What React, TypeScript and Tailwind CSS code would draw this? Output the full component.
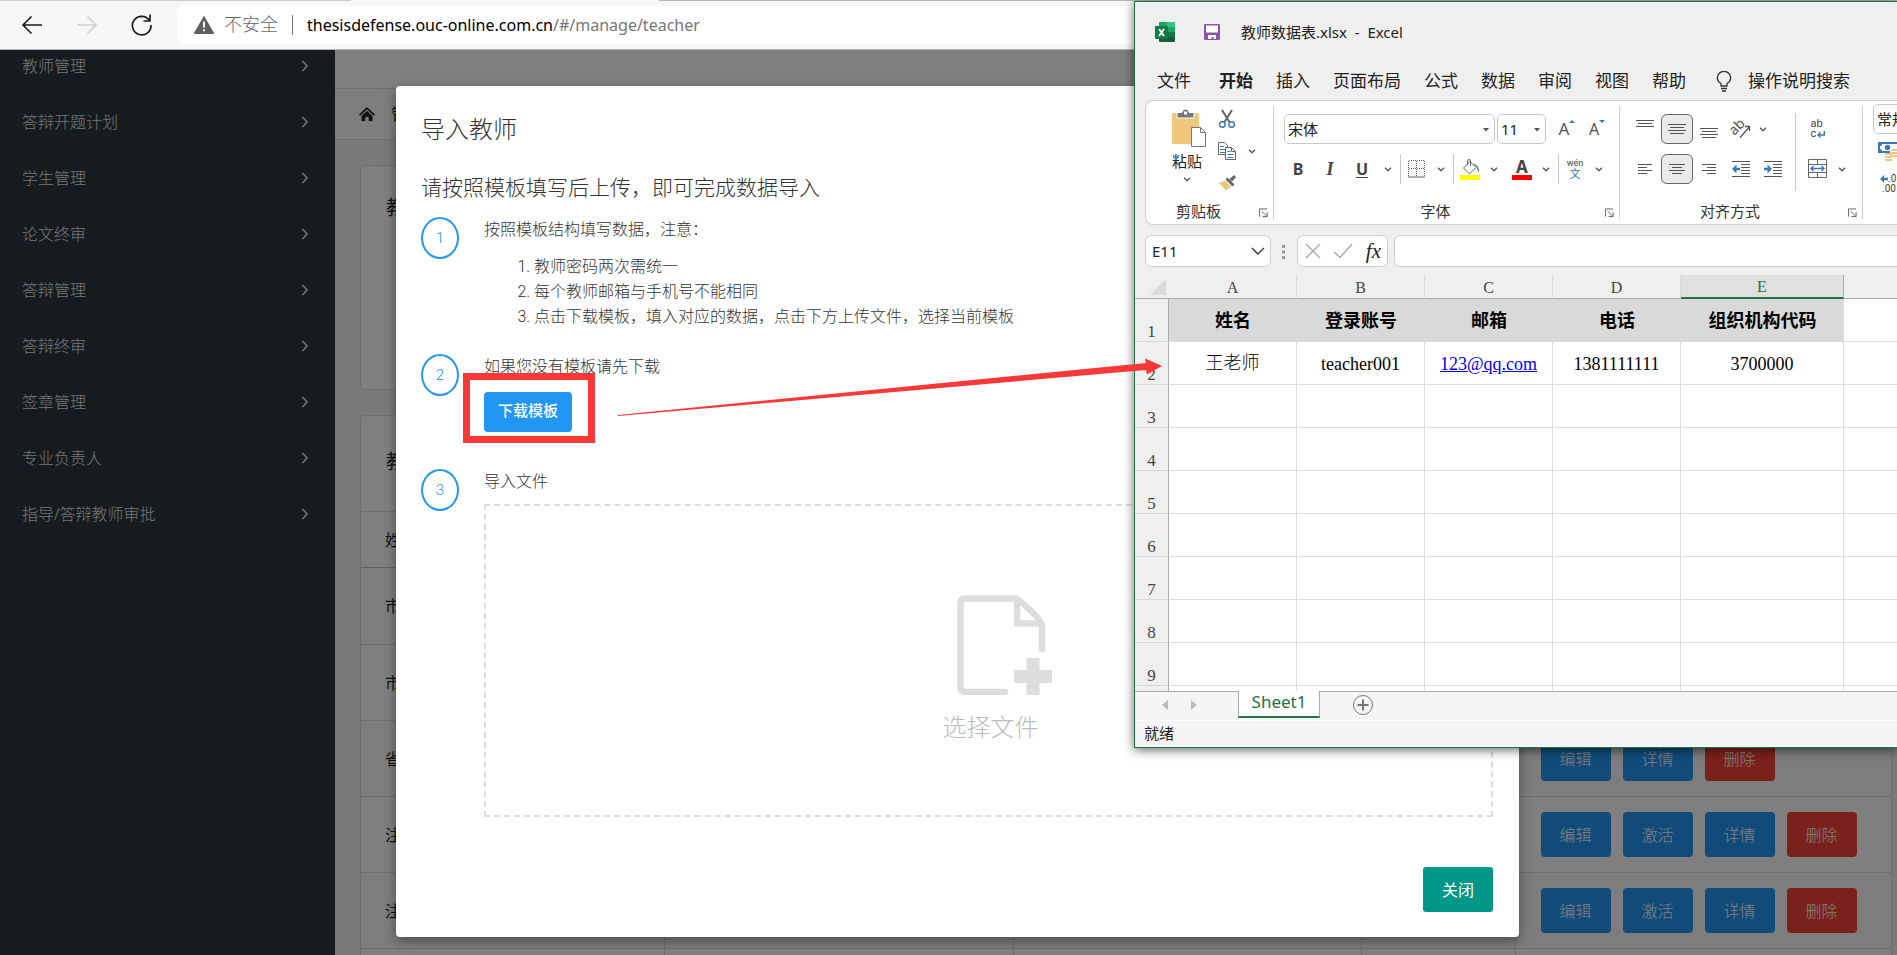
import type { ReactNode } from "react";

interface TeacherRow {
  name: string;
  actions: string[];
}

const menuItems = [
  "教师管理",
  "答辩开题计划",
  "学生管理",
  "论文终审",
  "答辩管理",
  "答辩终审",
  "签章管理",
  "专业负责人",
  "指导/答辩教师审批",
];

const teacherRows: TeacherRow[] = [
  { name: "市", actions: [] },
  { name: "市", actions: [] },
  { name: "省", actions: ["编辑", "详情", "删除"] },
  { name: "注", actions: ["编辑", "激活", "详情", "删除"] },
  { name: "注", actions: ["编辑", "激活", "详情", "删除"] },
  { name: "", actions: [] },
];

const ribbonTabs = ["开始", "插入", "页面布局", "公式", "数据", "审阅", "视图", "帮助"];
const sheetHeader = ["姓名", "登录账号", "邮箱", "电话", "组织机构代码"];
const sheetRows = ["3", "4", "5", "6", "7", "8", "9", ""];

const BrowserBar = () => (
  <header className="relative flex h-[50px] items-center border-b border-[#b5b5b5] bg-[#f7f7f7] pl-5">
    <div className="absolute left-0 top-0 h-px w-[351px] bg-[#cdcdcd]" />
    <div className="absolute left-[659px] right-0 top-0 h-px bg-[#b8b8b8]" />
    <button aria-label="back" className="h-6 w-6">
      <svg viewBox="0 0 24 24" className="h-6 w-6" fill="none" stroke="#1b1b1b" strokeWidth="1.6">
        <path d="M22 12H3M11.500 3.500L3 12l8.500 8.500" />
      </svg>
    </button>
    <button aria-label="forward" className="ml-[30px] h-6 w-6">
      <svg viewBox="0 0 24 24" className="h-6 w-6" fill="none" stroke="#cfcfcf" strokeWidth="1.600">
        <path d="M3 12h19M13.500 3.500L22 12l-8.500 8.500" />
      </svg>
    </button>
    <button aria-label="reload" className="ml-[31px] h-6 w-6">
      <svg viewBox="0 0 24 24" className="h-6 w-6" fill="none" stroke="#1b1b1b" strokeWidth="1.700">
        <path d="M20.500 7.500A9.300 9.300 0 1 0 22 12M21 1.500V8h-6.500" />
      </svg>
    </button>
    <div className="ml-6 flex h-[38px] flex-1 items-center rounded-md bg-white pl-[17px]">
      <svg viewBox="0 0 20 18" className="h-[18px] w-5">
        <path d="M10 0.500L19.800 17.500H0.200z" fill="#5f5f5f" stroke="#5f5f5f" strokeLinejoin="round" />
        <path d="M10 5.500v6M10 13.200v2" stroke="#fff" strokeWidth="1.800" />
      </svg>
      <span className="ml-[10px] text-[18px] font-light text-[#666]">不安全</span>
      <span className="mx-[14px] h-5 w-px bg-[#777]" />
      <span className="text-[16px] text-[#767676]">
        <span className="text-black">thesisdefense.ouc-online.com.cn</span>/#/manage/teacher
      </span>
    </div>
  </header>
);

const Sidebar = () => (
  <nav className="w-[335px] shrink-0 overflow-hidden bg-[#2a363c]">
    <ul className="-mt-3">
      {menuItems.map((item) => (
        <li key={item}>
          <a href="#menu" className="flex h-14 items-center justify-between pl-[22px] pr-[26px] text-[16px] font-light text-[#e8eaeb]">
            {item}
            <svg viewBox="0 0 8 12" className="h-3 w-2" fill="none" stroke="#e8eaeb" strokeWidth="1.600">
              <path d="M1.500 1l4.500 5-4.500 5" />
            </svg>
          </a>
        </li>
      ))}
    </ul>
  </nav>
);

const ManagePage = () => (
  <main className="min-w-0 flex-1 overflow-hidden bg-[#f5f5f5] text-[#222]">
    <div className="h-[39px] border-b border-[#ddd] bg-white" />
    <div className="flex h-[51px] items-center border-b border-[#ddd] bg-[#fdfdfd] pl-6">
      <svg viewBox="0 0 16 14" className="h-[14px] w-4" fill="#222">
        <path d="M8 0L16 7.500l-1.200 1.200L8 2.400 1.200 8.700 0 7.500z" />
        <path d="M8 4l5.500 5v5H9.700v-4H6.300v4H2.500V9z" />
      </svg>
      <span className="ml-4 text-[16px]">管</span>
    </div>
    <div className="ml-[25px] mr-[5px] mt-[25px] h-[225px] rounded-sm border border-[#ddd] bg-white pl-[25px] pt-6 text-[20px] leading-9">
      教
    </div>
    <div className="ml-[25px] mr-[5px] mt-[25px] rounded-sm border border-[#ddd] bg-white">
      <div className="h-[95px] pl-[25px] pt-7 text-[20px] leading-9">教</div>
      <table className="w-full table-fixed border-collapse text-[16px]">
        <colgroup>
          <col className="w-[303px]" />
          <col className="w-[349px]" />
          <col className="w-[348px]" />
          <col className="w-[154px]" />
          <col />
        </colgroup>
        <thead>
          <tr className="h-14 border-b border-t border-t-[#ddd] border-b-[#bbb]">
            <th className="pl-6 text-left font-normal">姓</th>
            <th />
            <th />
            <th />
            <th />
          </tr>
        </thead>
        <tbody>
          {teacherRows.map((row, index) => (
            <tr key={index} className="h-[76px] border-b border-[#ddd] first:h-[77px] odd:bg-[#fafafa]">
              <td className="border-r border-[#ddd] pl-6">{row.name}</td>
              <td className="border-r border-[#ddd]" />
              <td className="border-r border-[#ddd]" />
              <td className="border-r border-[#ddd]" />
              <td>
                <div className="flex gap-3 pl-[25px]">
                  {row.actions.map((action) => (
                    <button
                      key={action}
                      className={`h-[45px] w-[70px] shrink-0 rounded-sm font-light text-white ${
                        action === "删除" ? "bg-[#f44336]" : "bg-[#2196f3]"
                      }`}
                    >
                      {action}
                    </button>
                  ))}
                </div>
              </td>
            </tr>
          ))}
        </tbody>
      </table>
    </div>
  </main>
);

const Step = ({ number, children }: { number: number; children: ReactNode }) => (
  <div className="flex gap-[25px]">
    <div className="flex h-[42px] w-[38px] shrink-0 items-center justify-center rounded-[50%] border-2 border-[#2196f3] font-[Roboto] text-[15px] font-light text-[#2196f3]">
      {number}
    </div>
    <div className="min-w-0 flex-1">{children}</div>
  </div>
);

const ImportDialog = () => (
  <section
    role="dialog"
    aria-label="导入教师"
    className="absolute left-[396px] right-[378px] top-[86px] rounded-[4px] bg-white py-[25px] pl-[25px] pr-[26px] text-[16px] font-light leading-6 text-[#333] shadow-[0_4px_12px_rgba(0,0,0,0.4)]"
  >
    <h2 className="text-[24px] leading-9">导入教师</h2>
    <h3 className="mt-6 text-[21px] leading-8">请按照模板填写后上传，即可完成数据导入</h3>
    <div className="mt-[14px]">
      <Step number={1}>
        <p>按照模板结构填写数据，注意：</p>
        <ol className="mt-[13px] list-decimal pl-[50px] leading-[25px] marker:font-[Roboto] marker:font-light">
          <li>教师密码两次需统一</li>
          <li>每个教师邮箱与手机号不能相同</li>
          <li>点击下载模板，填入对应的数据，点击下方上传文件，选择当前模板</li>
        </ol>
      </Step>
    </div>
    <div className="mt-[25px]">
      <Step number={2}>
        <p>如果您没有模板请先下载</p>
        <div className="relative mt-[14px] h-10 w-[88px]">
          <button className="h-10 w-[88px] rounded-sm bg-[#2196f3] pb-1 text-[15px] font-medium text-white">下载模板</button>
          <div className="absolute -bottom-[11px] -left-[21px] -right-[23px] -top-[19px] border-[7px] border-[#fb3838]" />
        </div>
      </Step>
    </div>
    <div className="mt-[37px]">
      <Step number={3}>
        <p>导入文件</p>
        <button className="mt-[11px] flex h-[313px] w-full flex-col items-center border-2 border-dashed border-[#ddd] pt-[89px] text-[24px] text-[#bbb]">
          <svg viewBox="0 0 96 100" className="ml-8 h-[100px] w-24" fill="none" stroke="#ddd" strokeWidth="6.500" strokeLinecap="round">
            <path d="M48 97H8.500Q3.500 97 3.500 91.500V8.500Q3.500 3.500 8.500 3.500H57Q61 3.500 72 14Q85 26 85 31V54M60 4v24.500h24" strokeLinejoin="round" />
            <path d="M76 63v37M57 81.500h38" strokeWidth="13" strokeLinecap="butt" />
          </svg>
          <span className="ml-1 mt-[14px] leading-9">选择文件</span>
        </button>
      </Step>
    </div>
    <div className="mt-[50px] flex justify-end">
      <button className="h-[45px] w-[70px] rounded-[3px] bg-[#009688] font-normal text-white">关闭</button>
    </div>
  </section>
);

const Chevron = ({ width = "w-5" }: { width?: string }) => (
  <button aria-label="more" className={`flex h-[30px] ${width} items-center justify-center`}>
    <svg viewBox="0 0 8 5" className="h-[5px] w-2 shrink-0" fill="none" stroke="#555" strokeWidth="1.300">
      <path d="M1 0.800l3 3 3-3" />
    </svg>
  </button>
);

const Tool = ({ label, width = "w-7", active, children }: { label: string; width?: string; active?: boolean; children: ReactNode }) => (
  <button
    aria-label={label}
    className={`flex h-[30px] shrink-0 items-center justify-center ${width} ${
      active ? "rounded-md border border-[#666] bg-[#ebebeb]" : ""
    }`}
  >
    {children}
  </button>
);

const Divider = () => <span className="mx-[2px] h-[30px] w-px shrink-0 bg-[#c8c8c8]" />;

const Combo = ({ label, value, width }: { label: string; value: string; width: string }) => (
  <label className={`relative block shrink-0 ${width}`}>
    <select
      aria-label={label}
      className="h-[30px] w-full appearance-none rounded-[5px] border border-[#c8c8c8] bg-white pl-[3px] text-[15px] text-[#222]"
    >
      <option>{value}</option>
    </select>
    <svg viewBox="0 0 6 4" className="absolute right-[6px] top-[14px] h-1 w-[6px]" fill="#555">
      <path d="M0 0h6L3 3.500z" />
    </svg>
  </label>
);

// lines are [x, width, y] inside an 18px box
const LinesIcon = ({ lines, children }: { lines: number[][]; children?: ReactNode }) => (
  <svg viewBox="0 0 18 18" className="h-[18px] w-[18px] shrink-0">
    {lines.map(([x, width, y], index) => (
      <rect key={index} x={x} y={y} width={width} height="1" fill="#555" />
    ))}
    {children}
  </svg>
);

const RibbonGroup = ({ label, children }: { label: string; children: ReactNode }) => (
  <>
    <div className="shrink-0">
      <div className="h-[100px]">{children}</div>
      <div className="flex items-center pr-[5px] text-[15px] leading-5 text-[#333]">
        <span className="flex-1 text-center">{label}</span>
        <button aria-label={`${label}设置`} className="ml-2">
          <svg viewBox="0 0 10 10" className="mt-1 h-[10px] w-[9px]" fill="none" stroke="#555">
            <path d="M0.500 9V0.500H9M3 3l5.500 5.500M9 4v5H4" />
          </svg>
        </button>
      </div>
    </div>
    <span className="my-[5px] w-px shrink-0 bg-[#d0d0d0]" />
  </>
);

const ClipboardGroup = () => (
  <RibbonGroup label="剪贴板">
    <div className="flex w-[127px] pl-[19px] text-[15px] text-[#222]">
      <button className="flex w-11 flex-col items-center pt-2 leading-5">
        <svg viewBox="0 0 36 38" className="ml-1 h-[38px] w-9">
          <rect x="1" y="4" width="27" height="31" rx="1" fill="#eec67c" />
          <path d="M6 9V3.500h5A3.500 3.500 0 0 1 18 3.500h5V9z" fill="#777" stroke="#fff" />
          <rect x="13" y="2.500" width="3" height="3" fill="#fff" />
          <path d="M20.500 18.500h9l5 5v14h-14z" fill="#fff" stroke="#777" />
          <path d="M29.500 18.500v5h5" fill="none" stroke="#777" />
        </svg>
        <span className="mt-1">粘贴</span>
        <svg viewBox="0 0 8 5" className="mt-[6px] h-[5px] w-2" fill="none" stroke="#555" strokeWidth="1.300">
          <path d="M1 0.800l3 3 3-3" />
        </svg>
      </button>
      <div className="flex w-9 flex-col gap-[2px] pt-[3px]">
        <Tool label="剪切" width="w-9">
          <svg viewBox="0 0 18 20" className="h-5 w-[18px]" fill="none">
            <path d="M4 1l7.500 12M14 1L6.500 13" stroke="#666" strokeWidth="2" />
            <circle cx="4.300" cy="15.500" r="2.800" stroke="#3b78b5" strokeWidth="1.400" />
            <circle cx="13.700" cy="15.500" r="2.800" stroke="#3b78b5" strokeWidth="1.400" />
          </svg>
        </Tool>
        <Tool label="复制" width="w-9">
          <svg viewBox="0 0 18 18" className="h-[18px] w-[18px]" fill="#fff" stroke="#666">
            <path d="M0.500 0.500h6l3 3v9h-9z" />
            <path d="M2 4.500h4M2 7.500h5M2 10.500h5" stroke="#3b78b5" />
            <path d="M7.500 5.500h6l4 4v8h-10zM13.500 5.500v4h4" />
            <path d="M9.500 9.500h3M9.500 12.500h6M9.500 15.500h6" stroke="#3b78b5" />
          </svg>
        </Tool>
        <Tool label="格式刷" width="w-9">
          <svg viewBox="0 0 18 16" className="h-4 w-[18px]">
            <path d="M1 8l6-2.500 6 6L8 15.500z" fill="#eec67c" />
            <path d="M7.500 4.500l2-2 7 7-2 2zM11.500 4L16 0l2 2-4 4.500z" fill="#666" />
          </svg>
        </Tool>
      </div>
      <div className="pt-[35px]">
        <Chevron width="w-[14px]" />
      </div>
    </div>
  </RibbonGroup>
);

const FontGroup = () => (
  <RibbonGroup label="字体">
    <div className="w-[345px] pt-[13px] text-[#444]">
      <div className="flex gap-[2px] pl-[10px]">
        <Combo label="字体" value="宋体" width="w-[211px]" />
        <Combo label="字号" value="11" width="w-[49px]" />
        <div className="ml-1 flex">
          <Tool label="增大字号" width="w-[30px]">
            <span className="text-[17px] text-[#555]">A</span>
            <svg viewBox="0 0 6 3" className="mb-4 h-[3px] w-[6px]"><path d="M3 0l3 3H0z" fill="#3b78b5" /></svg>
          </Tool>
          <Tool label="减小字号" width="w-[30px]">
            <span className="text-[16px] text-[#555]">A</span>
            <svg viewBox="0 0 6 3" className="mb-4 h-[3px] w-[6px]"><path d="M0 0h6L3 3z" fill="#3b78b5" /></svg>
          </Tool>
        </div>
      </div>
      <div className="mt-[10px] flex pl-2 text-[16px]">
        <Tool label="加粗" width="w-8"><b>B</b></Tool>
        <Tool label="倾斜" width="w-8"><b className="font-['Liberation_Serif'] text-[18px] italic">I</b></Tool>
        <Tool label="下划线" width="w-8"><b className="underline underline-offset-2">U</b></Tool>
        <Chevron />
        <Divider />
        <Tool label="边框">
          <svg viewBox="0 0 18 18" className="h-[18px] w-[18px]" fill="none" stroke="#666">
            <path d="M0.500 16V0.500h16V16M8.500 1v15M1 8.500h15" strokeDasharray="1 1" />
            <path d="M0 17h17" />
          </svg>
        </Tool>
        <Chevron />
        <Divider />
        <Tool label="填充颜色">
          <svg viewBox="0 0 20 21" className="h-[21px] w-5" fill="none">
            <path d="M3.500 9L10 2.500l6 6L9.500 15z" fill="#fff" stroke="#666" />
            <path d="M7.500 6V2a1.500 1.500 0 0 1 3 0v5" stroke="#666" />
            <path d="M13 4.500q6 1 6 9-2.500-2-2-5z" fill="#3b78b5" />
            <path d="M0 16h20v5H0z" fill="#ff0" />
          </svg>
        </Tool>
        <Chevron />
        <div className="ml-1">
          <Tool label="字体颜色">
            <span className="w-5 border-b-[5px] border-[#f00] text-center text-[17px] font-bold leading-4">A</span>
          </Tool>
        </div>
        <Chevron />
        <Divider />
        <Tool label="拼音">
          <span className="flex flex-col items-center">
            <span className="font-[Roboto] text-[9px] leading-[10px]">wén</span>
            <span className="text-[11px] leading-3 text-[#2f74b5]">文</span>
          </span>
        </Tool>
        <Chevron />
      </div>
    </div>
  </RibbonGroup>
);

const AlignGroup = () => (
  <RibbonGroup label="对齐方式">
    <div className="flex w-[242px] pl-[9px] pt-3">
      <div className="w-40 pt-px">
        <div className="flex">
          <Tool label="顶端对齐" width="w-8"><LinesIcon lines={[[0, 18, 0], [2, 14, 3], [0, 18, 6]]} /></Tool>
          <Tool label="垂直居中" width="w-8" active><LinesIcon lines={[[0, 18, 4], [2, 14, 7], [0, 18, 10], [2, 14, 13]]} /></Tool>
          <Tool label="底端对齐" width="w-8"><LinesIcon lines={[[0, 18, 8], [2, 14, 11], [0, 18, 14], [2, 14, 17]]} /></Tool>
          <Tool label="方向" width="w-8">
            <svg viewBox="0 0 18 18" className="h-[18px] w-[18px] overflow-visible" fill="none" stroke="#555">
              <text x="-2" y="12" fontSize="14" fill="#555" stroke="none" transform="rotate(-45 5 9)">ab</text>
              <path d="M8 17.500l9-10M13 6.500h4.500V11" strokeWidth="1.300" />
            </svg>
          </Tool>
          <Chevron width="w-3" />
        </div>
        <div className="mt-[10px] flex">
          <Tool label="左对齐" width="w-8"><LinesIcon lines={[[2, 14, 4], [2, 9, 7], [2, 14, 10], [2, 9, 13]]} /></Tool>
          <Tool label="居中" width="w-8" active><LinesIcon lines={[[1, 16, 4], [4, 10, 7], [1, 16, 10], [4, 10, 13]]} /></Tool>
          <Tool label="右对齐" width="w-8"><LinesIcon lines={[[2, 14, 4], [7, 9, 7], [2, 14, 10], [7, 9, 13]]} /></Tool>
          <Tool label="减少缩进" width="w-8">
            <LinesIcon lines={[[0, 18, 1], [9, 9, 4], [9, 9, 7], [9, 9, 10], [9, 9, 13], [0, 18, 16]]}>
              <path d="M0 9l4.500-4.500v3.200H8v2.600H4.500v3.200z" fill="#3b78b5" />
            </LinesIcon>
          </Tool>
          <Tool label="增加缩进" width="w-8">
            <LinesIcon lines={[[0, 18, 1], [9, 9, 4], [9, 9, 7], [9, 9, 10], [9, 9, 13], [0, 18, 16]]}>
              <path d="M8 9L3.500 4.500v3.200H0v2.600h3.500v3.200z" fill="#3b78b5" />
            </LinesIcon>
          </Tool>
        </div>
      </div>
      <span className="ml-[6px] h-[78px] w-px bg-[#c8c8c8]" />
      <div className="ml-1 pt-px">
        <Tool label="自动换行" width="w-9">
          <span className="flex flex-col items-start font-[Roboto] text-[11px] text-[#444]">
            <span className="leading-[10px]">ab</span>
            <span className="flex items-center leading-[10px]">
              c
              <svg viewBox="0 0 8 7" className="ml-px h-[7px] w-2" fill="none" stroke="#3b78b5" strokeWidth="1.400">
                <path d="M7.300 0v4H1M3.500 1.200L1 4l2.500 2.500" />
              </svg>
            </span>
          </span>
        </Tool>
        <div className="mt-[10px] flex">
          <Tool label="合并后居中" width="w-9">
            <svg viewBox="0 0 20 20" className="h-5 w-5" fill="none" stroke="#666">
              <path d="M0.500 0.500h18v18h-18zM0.500 5.500h18M0.500 13.500h18M9.500 0.500v5M9.500 13.500v5" />
              <path d="M3 9.500h13M5.500 7L3 9.500 5.500 12M13.500 7L16 9.500 13.500 12" stroke="#3b78b5" strokeWidth="1.400" />
            </svg>
          </Tool>
          <Chevron width="w-3" />
        </div>
      </div>
    </div>
  </RibbonGroup>
);

const NumberGroup = () => (
  <div className="shrink-0 pl-[10px] pt-[3px]">
    <Combo label="数字格式" value="常规" width="w-[120px]" />
    <div className="pl-[5px] pt-2">
      <svg viewBox="0 0 30 20" className="h-5 w-[30px]">
        <path d="M0 0h30v11H0z" fill="#3b78b5" />
        <path d="M2 4q2 0 2-2h20v7H4Q4 7 2 7z" fill="#fff" />
        <circle cx="9.500" cy="5.500" r="2.700" fill="#3b78b5" />
        <path d="M12 7h18v12H6v-7h6z" fill="#fff" />
        <path d="M13 8h9M13 11h9M13 14h9M7 12h7M7 15h7M7 18h7" stroke="#eec67c" strokeWidth="2" />
      </svg>
      <div className="mt-3 flex flex-col pl-[2px] font-[Roboto] text-[10px] leading-[10px] text-[#444]">
        <span className="flex items-center">
          <svg viewBox="0 0 8 8" className="h-2 w-2"><path d="M0 4l4-4v2.700h4v2.600H4V8z" fill="#3b78b5" /></svg>.0
        </span>
        <span className="pl-[2px]">.00</span>
      </div>
    </div>
  </div>
);

const SheetGrid = () => (
  <div className="h-[416px] overflow-hidden bg-white">
    <table className="w-full table-fixed border-separate border-spacing-0 text-center font-['Liberation_Serif','Noto_Sans_CJK_SC',serif] text-[18px] leading-6">
      <colgroup>
        <col className="w-[34px]" />
        <col className="w-32" />
        <col className="w-32" />
        <col className="w-32" />
        <col className="w-32" />
        <col className="w-[163px]" />
        <col />
      </colgroup>
      <thead>
        <tr className="h-6 bg-[#efefef] text-[#444]">
          <th className="border-b border-[#ababab] p-0">
            <svg viewBox="0 0 16 16" className="ml-auto mr-[3px] h-4 w-4"><path d="M16 0v16H0z" fill="#dcdcdc" /></svg>
          </th>
          {["A", "B", "C", "D"].map((letter) => (
            <th key={letter} className="h-6 border-b border-r border-b-[#ababab] border-r-[#d9d9d9] p-0 pt-[3px] text-[16px] font-normal leading-5">
              {letter}
            </th>
          ))}
          <th className="border-b-2 border-r border-b-[#217346] border-r-[#ababab] bg-[#e0e0e0] p-0 pt-[2px] text-[16px] font-normal leading-5 text-[#217346]">E</th>
          <th className="border-b border-[#ababab]" />
        </tr>
      </thead>
      <tbody>
        <tr className="h-[43px]">
          <RowNumber value="1" />
          {sheetHeader.map((title) => (
            <th key={title} className="bg-[#d9d9d9] p-0 font-bold text-black">{title}</th>
          ))}
          <td className="border-b border-[#dcdcdc]" />
        </tr>
        <tr className="h-[43px]">
          <RowNumber value="2" />
          <td className="border-b border-r border-[#dcdcdc] p-0 font-light">王老师</td>
          <td className="border-b border-r border-[#dcdcdc] p-0 pt-[2px]">teacher001</td>
          <td className="border-b border-r border-[#dcdcdc] p-0 pt-[2px]">
            <a href="#mail" className="text-[#0000ff] underline">123@qq.com</a>
          </td>
          <td className="border-b border-r border-[#dcdcdc] p-0 pt-[2px]">1381111111</td>
          <td className="border-b border-r border-[#dcdcdc] p-0 pt-[2px]">3700000</td>
          <td className="border-b border-[#dcdcdc]" />
        </tr>
        {sheetRows.map((row) => (
          <tr key={row} className="h-[43px]">
            <RowNumber value={row} />
            {sheetHeader.map((title) => (
              <td key={title} className="border-b border-r border-[#dcdcdc]" />
            ))}
            <td className="border-b border-[#dcdcdc]" />
          </tr>
        ))}
      </tbody>
    </table>
  </div>
);

const RowNumber = ({ value }: { value: string }) => (
  <th className="border-b border-r border-b-[#d5d5d5] border-r-[#ababab] bg-[#efefef] p-0 align-bottom text-[17px] font-normal leading-[18px] text-[#444]">
    {value}
  </th>
);

const ExcelWindow = () => (
  <section className="absolute left-[1134px] right-0 top-px overflow-hidden border border-r-0 border-[#217346] bg-[#efefef] shadow-[0_2px_10px_rgba(0,0,0,0.6)]">
    <div className="flex h-[60px] items-center pl-5">
      <svg viewBox="0 0 20 20" className="h-5 w-5">
        <rect x="4" width="16" height="20" rx="1" fill="#185c37" />
        <path d="M4 1q0-1 1-1h7v5H4z" fill="#21a366" />
        <path d="M12 0h7q1 0 1 1v4h-8z" fill="#33c481" />
        <path d="M4 5h8v5H4z" fill="#107c41" />
        <path d="M12 5h8v5h-8z" fill="#21a366" />
        <path d="M12 10h8v5h-8z" fill="#107c41" />
        <rect y="4" width="13" height="13" rx="1" fill="#107c41" />
        <path d="M4 7l5 7M9 7l-5 7" stroke="#fff" strokeWidth="1.900" />
      </svg>
      <svg viewBox="0 0 16 16" className="ml-[29px] h-4 w-4">
        <rect width="16" height="16" rx="1" fill="#8a57ab" />
        <path d="M2 1.500h12v7H2zM4 11h8v4H9.500v-2h-2v2H4z" fill="#fff" />
      </svg>
      <span className="ml-[21px] whitespace-pre text-[15px] text-[#222]">教师数据表.xlsx  -  Excel</span>
    </div>
    <div className="flex h-[38px] items-center whitespace-nowrap pl-[22px] text-[17px] text-[#222]">
      <button className="mr-[5px]">文件</button>
      {ribbonTabs.map((tab) => (
        <button key={tab} className={`ml-[23px] ${tab === "开始" ? "font-bold" : ""}`}>
          {tab}
        </button>
      ))}
      <svg viewBox="0 0 16 21" className="ml-[30px] h-[21px] w-4 shrink-0" fill="none" stroke="#333" strokeWidth="1.300">
        <path d="M5 15v-2.500Q1.300 10 1.300 7a6.500 6.500 0 0 1 13.400 0Q14.700 10 11 12.500V15zM5 17.500h6M6 20h4" />
      </svg>
      <button className="ml-4">操作说明搜索</button>
    </div>
    <div className="ml-[10px] flex h-[125px] overflow-hidden rounded-l-lg border border-r-0 border-[#d0d0d0] bg-white">
      <ClipboardGroup />
      <FontGroup />
      <AlignGroup />
      <NumberGroup />
    </div>
    <div className="mb-2 ml-[10px] mt-[10px] flex h-8">
      <button className="flex w-[126px] items-center justify-between rounded-md border border-[#d0d0d0] bg-white pl-[6px] pr-[5px] text-[15px] text-[#222]">
        E11
        <svg viewBox="0 0 14 8" className="h-2 w-[14px]" fill="none" stroke="#333" strokeWidth="1.400"><path d="M1 1l6 6 6-6" /></svg>
      </button>
      <svg viewBox="0 0 4 14" className="ml-[11px] mr-[11px] mt-[10px] h-[14px] w-1" fill="#999">
        <path d="M0 0h3v3H0zM0 5.500h3v3H0zM0 11h3v3H0z" />
      </svg>
      <div className="flex w-[91px] items-center justify-between rounded-md border border-[#d0d0d0] bg-white pl-[7px] pr-[6px]">
        <svg viewBox="0 0 16 16" className="h-4 w-4" fill="none" stroke="#aaa" strokeWidth="1.400"><path d="M1 1l14 14M15 1L1 15" /></svg>
        <svg viewBox="0 0 20 16" className="h-4 w-5" fill="none" stroke="#aaa" strokeWidth="1.400"><path d="M1 9l6 5.500L19 1" /></svg>
        <span className="font-['Liberation_Serif'] text-[21px] italic leading-6 text-[#222]">fx</span>
      </div>
      <input aria-label="编辑栏" className="ml-[6px] min-w-0 flex-1 rounded-l-md border border-r-0 border-[#d0d0d0] bg-white" />
    </div>
    <SheetGrid />
    <div className="flex h-[29px] border-t border-[#ababab] bg-[#f5f5f5]">
      <svg viewBox="0 0 36 10" className="ml-[27px] mt-2 h-[10px] w-9" fill="#bbb">
        <path d="M6 0v10L0 5zM29 0v10l6-5z" />
      </svg>
      <button className="-mt-px ml-10 h-[27px] w-[82px] border-x border-b-2 border-x-[#ababab] border-b-[#217346] bg-white pb-1 text-[17px] leading-5 text-[#217346]">
        Sheet1
      </button>
      <button aria-label="新工作表" className="ml-8 h-6">
        <svg viewBox="0 0 22 22" className="mt-[2px] h-[22px] w-[22px]" fill="none" stroke="#777">
          <circle cx="11" cy="11" r="9.500" />
          <path d="M11 5.500v11M5.500 11h11" strokeWidth="2" />
        </svg>
      </button>
    </div>
    <div className="h-[27px] border-t border-white bg-[#f4f4f4] pl-[9px] text-[15px] leading-6 text-[#222]">就绪</div>
  </section>
);

const App = () => {
  return (
    <div className="relative flex h-screen flex-col overflow-hidden font-['Noto_Sans','Noto_Sans_CJK_SC',sans-serif]">
      <BrowserBar />
      <div className="relative flex min-h-0 flex-1">
        <Sidebar />
        <ManagePage />
        <div className="absolute inset-0 bg-black/50" />
      </div>
      <ImportDialog />
      <ExcelWindow />
      {/* arrow from the download button to the teacher row */}
      <svg viewBox="0 0 544 60" className="pointer-events-none absolute left-[618px] top-[357px] h-[60px] w-[544px]" fill="#fb3838">
        <path d="M0 58L528 6l-1-4.500L544 9l-15 8.500-1-4.500L0 59z" />
      </svg>
    </div>
  );
};

export default App;
